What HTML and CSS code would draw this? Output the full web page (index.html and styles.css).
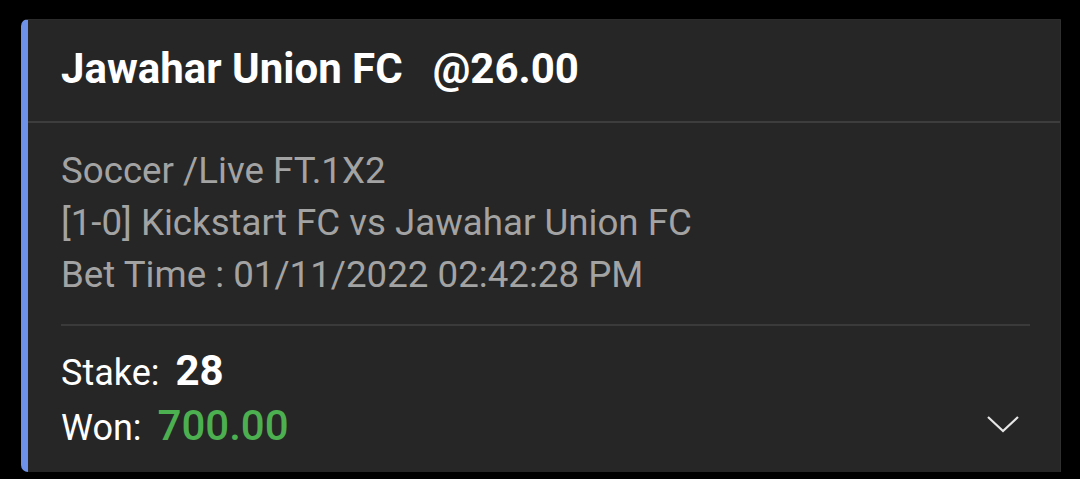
FILE: index.html
```html
<!DOCTYPE html>
<html>
<head>
<meta charset="utf-8">
<link rel="stylesheet" href="styles.css">
</head>
<body>
<div class="card">
  <div class="head">
    <span class="team">Jawahar Union FC</span>
    <span class="odds">@26.00</span>
  </div>
  <div class="info">
    <div class="line">Soccer /Live FT.1X2</div>
    <div class="line">[1-0] Kickstart FC vs Jawahar Union FC</div>
    <div class="line">Bet Time : 01/11/2022 02:42:28 PM</div>
  </div>
  <div class="sep"></div>
  <div class="foot">
    <div class="amounts">
      <div class="row"><span class="lbl">Stake:</span><span class="stake">28</span></div>
      <div class="row"><span class="lbl">Won:</span><span class="won">700.00</span></div>
    </div>
    <svg class="chev" width="32" height="18" viewBox="0 0 32 18"><path d="M1 2 L16 16 L31 2" fill="none" stroke="#e6e6e6" stroke-width="2.2"/></svg>
  </div>
</div>
</body>
</html>
```

FILE: styles.css
```css
html, body { margin: 0; padding: 0; background: #000; }
body { font-family: Roboto, "Noto Sans", sans-serif; width: 1080px; height: 479px; overflow: hidden; }
.card {
  margin: 19px 0 0 21px;
  width: 1040px;
  height: 453px;
  box-sizing: border-box;
  background: #262626;
  border-left: 7px solid #6e92ea;
  border-right: 1px solid #2f2f2f;
  border-top: 1px solid #2c2c2c;
  border-radius: 7px 0 0 7px;
  display: flex;
  flex-direction: column;
}
.head {
  height: 103px;
  flex: none;
  box-sizing: border-box;
  border-bottom: 2px solid #3d3d3d;
  display: flex;
  align-items: center;
  padding-left: 33px;
  padding-bottom: 4px;
  color: #fff;
  font-weight: 700;
  font-size: 42px;
}
.odds { margin-left: 30px; }
.info {
  padding: 22px 0 0 33px;
  color: #a3a3a3;
  font-size: 36.7px;
}
.line { height: 52px; line-height: 52px; white-space: nowrap; }
.sep { height: 2px; flex: none; background: #3a3a3a; margin: 23px 30px 0 33px; }
.foot {
  display: flex;
  align-items: flex-start;
  justify-content: space-between;
  padding: 17px 41px 0 33px;
}
.row { height: 55px; line-height: 55px; font-size: 36px; color: #fff; white-space: nowrap; }
.lbl { margin-right: 16px; }
.stake { font-weight: 700; font-size: 42px; }
.won { color: #4caf50; font-weight: 500; font-size: 42px; }
.chev { margin-top: 72px; }
```
